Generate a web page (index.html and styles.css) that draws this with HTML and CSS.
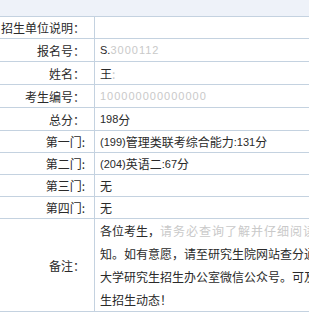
FILE: index.html
```html
<!DOCTYPE html>
<html lang="zh">
<head>
<meta charset="utf-8">
<link rel="stylesheet" href="styles.css">
</head>
<body>
<div class="band"></div>
<div class="grid">
  <div class="row h21"><div class="label">招生单位说明：</div><div class="value"><span class="blur">　</span></div></div>
  <div class="row h22"><div class="label">报名号：</div><div class="value"><span class="num">S.</span><span class="num blur">3000112</span></div></div>
  <div class="row h22"><div class="label">姓名：</div><div class="value">王<span class="blur">:</span></div></div>
  <div class="row h22"><div class="label">考生编号：</div><div class="value"><span class="num blur">100000000000000</span></div></div>
  <div class="row h22"><div class="label">总分：</div><div class="value"><span class="num">198</span>分</div></div>
  <div class="row h21"><div class="label">第一门:</div><div class="value"><span class="num">(199)</span>管理类联考综合能力<span class="num">:131</span>分</div></div>
  <div class="row h21"><div class="label">第二门:</div><div class="value"><span class="num">(204)</span>英语二<span class="num">:67</span>分</div></div>
  <div class="row h21"><div class="label">第三门:</div><div class="value">无</div></div>
  <div class="row h21"><div class="label">第四门:</div><div class="value">无</div></div>
  <div class="row remark"><div class="label">备注：</div><div class="value lines">各位考生，<span class="blur">请务必查询了解并仔细阅读</span>研究<br>知。如有意愿，请至研究生院网站查分通<br>大学研究生招生办公室微信公众号。可及<br>生招生动态！</div></div>
</div>
</body>
</html>
```
FILE: styles.css
```css
html, body {
  margin: 0;
  padding: 0;
  background: #ffffff;
  overflow: hidden;
}
body {
  width: 309px;
  height: 314px;
  font-family: "Noto Sans CJK SC", "Liberation Sans", sans-serif;
  font-size: 12px;
  color: #2a2a2a;
}
.band {
  height: 16px;
  background: #eef2f9;
  border-bottom: 1px solid #c4d2e0;
}
.grid {
  display: flex;
  flex-direction: column;
  width: 309px;
  overflow: hidden;
}
.row {
  display: flex;
  border-bottom: 1px solid #c4d2e0;
}
.h21 { height: 21px; }
.h22 { height: 22px; }
.remark { height: 92px; }
.label {
  box-sizing: border-box;
  width: 95px;
  flex: none;
  border-right: 1px solid #c4d2e0;
  display: flex;
  align-items: center;
  justify-content: flex-end;
  padding-right: 9px;
  white-space: nowrap;
}
.value {
  display: flex;
  align-items: center;
  padding-left: 5px;
  min-width: 0;
  flex: 1;
  white-space: nowrap;
  overflow: hidden;
}
.value.lines {
  display: block;
  line-height: 23px;
}
.num {
  font-family: "Liberation Sans", sans-serif;
  font-size: 11px;
}
.blur {
  color: #c9c9c9;
  letter-spacing: 1px;
}
```
